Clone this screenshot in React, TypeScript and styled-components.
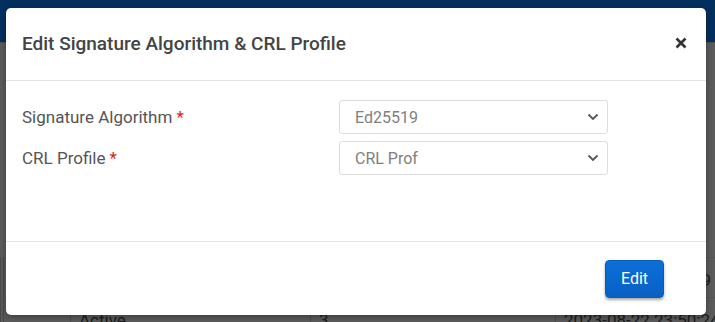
import React from "react";
import styled, { createGlobalStyle } from "styled-components";

const Global = createGlobalStyle`
  html, body { margin: 0; padding: 0; }
  body {
    width: 715px;
    height: 322px;
    overflow: hidden;
    font-family: Roboto, "Liberation Sans", sans-serif;
    background: #5b5b5b;
  }
  * { box-sizing: border-box; }
`;

const Page = styled.div`
  position: relative;
  width: 715px;
  height: 322px;
  overflow: hidden;
  background: #5b5b5b;
`;

const TopBar = styled.div`
  height: 43px;
  background: #032f5f;
  border-bottom: 1px solid #4c4c4c;
`;

const BgTable = styled.div`
  display: grid;
  grid-template-columns: 3px 67px 240px 245px 1fr;
  margin-top: 214px;
`;

const BgCell = styled.div<{ $align?: string }>`
  height: 40px;
  border-left: 1px solid #4a4a4a;
  border-top: 1px solid #545454;
  padding: 12px 4px 0 8px;
  color: #1c1c1c;
  font-size: 17px;
  text-align: ${(p) => p.$align || "left"};
  white-space: nowrap;
  overflow: hidden;
`;

const Modal = styled.div`
  position: absolute;
  left: 6px;
  top: 8px;
  width: 700px;
  height: 307px;
  background: #fff;
  border-radius: 5px;
  box-shadow: 0 2px 6px rgba(0, 0, 0, 0.35);
  display: flex;
  flex-direction: column;
`;

const Header = styled.div`
  height: 73px;
  display: flex;
  align-items: center;
  justify-content: space-between;
  padding: 0 18px 2px 16px;
  border-bottom: 1px solid #e4e4e4;
`;

const Title = styled.h4`
  margin: 0;
  font-size: 19px;
  font-weight: 500;
  color: #444;
`;

const Close = styled.button`
  border: 0;
  background: none;
  padding: 0;
  width: 14px;
  height: 14px;
  display: flex;
  align-items: center;
  justify-content: center;
  cursor: pointer;
`;

const Body = styled.div`
  flex: 1;
  padding: 19px 16px 0;
  display: flex;
  flex-direction: column;
  gap: 7px;
  border-bottom: 1px solid #e4e4e4;
`;

const Row = styled.div`
  display: grid;
  grid-template-columns: 317px 269px;
  align-items: center;
`;

const Label = styled.label`
  font-size: 17px;
  color: #555;
`;

const Req = styled.span`
  color: #e02020;
  margin-left: 4px;
`;

const Select = styled.div`
  height: 34px;
  border: 1px solid #dcdcdc;
  border-radius: 3px;
  display: flex;
  align-items: center;
  justify-content: space-between;
  padding: 0 8px 0 15px;
  font-size: 16px;
  color: #808080;
`;

const Footer = styled.div`
  height: 73px;
  display: flex;
  align-items: center;
  justify-content: flex-end;
  padding: 0 42px 0 16px;
`;

const Button = styled.button`
  width: 59px;
  height: 38px;
  border: 1px solid #0a5bb5;
  border-radius: 4px;
  background: linear-gradient(#0b6fd8, #0860c4);
  color: #fff;
  font-family: Roboto, "Liberation Sans", sans-serif;
  font-size: 16px;
  box-shadow: 0 2px 3px rgba(0, 0, 0, 0.35);
  cursor: pointer;
`;

const Chevron = () => (
  <svg width="12" height="8" viewBox="0 0 12 8">
    <path d="M1.5 1.5 L6 6 L10.5 1.5" fill="none" stroke="#555" strokeWidth="1.8" />
  </svg>
);

const XIcon = () => (
  <svg width="12" height="12" viewBox="0 0 12 12">
    <path d="M1.5 1.5 L10.5 10.5 M10.5 1.5 L1.5 10.5" stroke="#333" strokeWidth="2.6" />
  </svg>
);

export default function App() {
  return (
    <Page>
      <Global />
      <TopBar />
      <BgTable>
        <BgCell />
        <BgCell />
        <BgCell />
        <BgCell />
        <BgCell $align="right">9</BgCell>
        <BgCell />
        <BgCell />
        <BgCell>Active</BgCell>
        <BgCell>3</BgCell>
        <BgCell>2023-08-22 23:50:24</BgCell>
      </BgTable>
      <Modal>
        <Header>
          <Title>Edit Signature Algorithm &amp; CRL Profile</Title>
          <Close aria-label="Close">
            <XIcon />
          </Close>
        </Header>
        <Body>
          <Row>
            <Label>
              Signature Algorithm<Req>*</Req>
            </Label>
            <Select>
              Ed25519
              <Chevron />
            </Select>
          </Row>
          <Row>
            <Label>
              CRL Profile<Req>*</Req>
            </Label>
            <Select>
              CRL Prof
              <Chevron />
            </Select>
          </Row>
        </Body>
        <Footer>
          <Button>Edit</Button>
        </Footer>
      </Modal>
    </Page>
  );
}
